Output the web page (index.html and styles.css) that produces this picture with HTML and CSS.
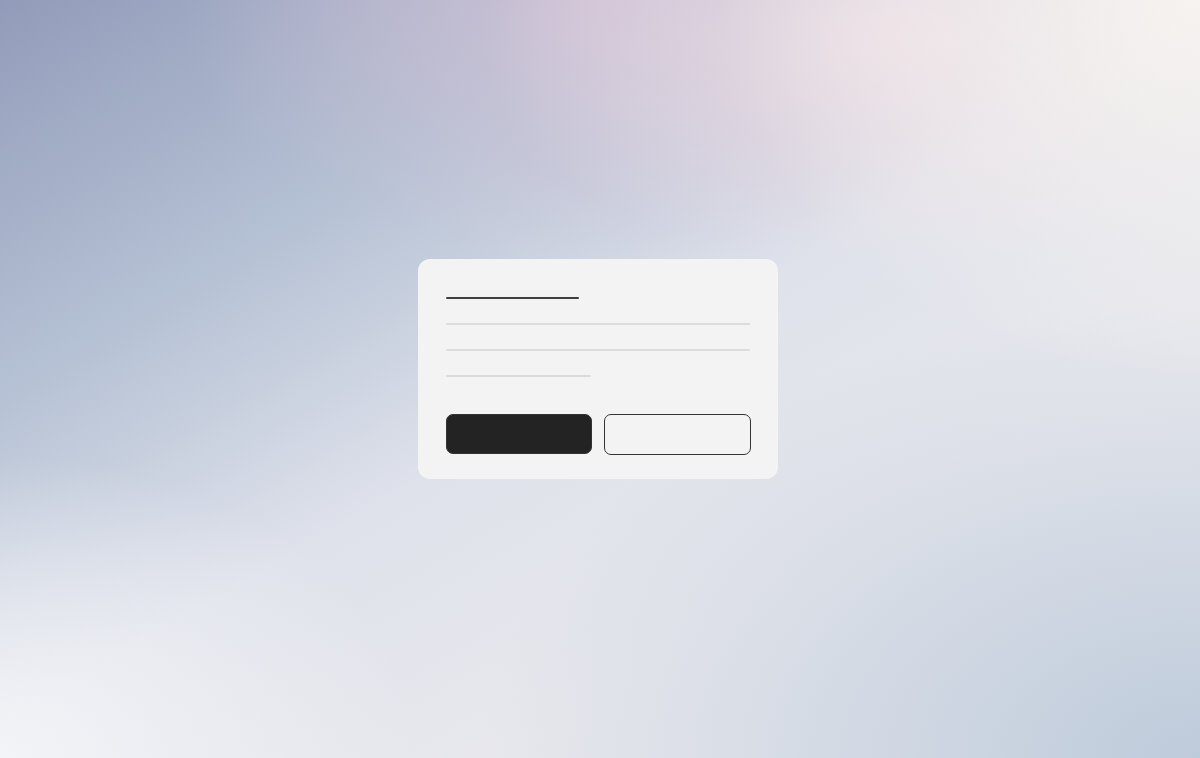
FILE: index.html
```html
<!DOCTYPE html>
<html lang="en">
<head>
<meta charset="utf-8">
<title>Dialog</title>
<link rel="stylesheet" href="styles.css">
</head>
<body>
<div class="stage">
  <div class="card" role="dialog">
    <div class="bar bar-title"></div>
    <div class="bar bar-text"></div>
    <div class="bar bar-text"></div>
    <div class="bar bar-text bar-short"></div>
    <div class="actions">
      <button class="btn btn-primary" type="button"></button>
      <button class="btn btn-secondary" type="button"></button>
    </div>
  </div>
</div>
</body>
</html>
```

FILE: styles.css
```css
* { box-sizing: border-box; }
html, body {
  margin: 0;
  padding: 0;
  width: 100%;
  height: 100%;
}
body {
  font-family: "Inter", "Liberation Sans", sans-serif;
  background:
    radial-gradient(ellipse 40% 50% at 100% 0%, rgba(246,243,240,1) 0%, rgba(246,243,240,0) 100%),
    radial-gradient(ellipse 35% 30% at 75% 5%, rgba(238,222,228,0.9) 0%, rgba(238,222,228,0) 100%),
    radial-gradient(ellipse 35% 40% at 0% 100%, rgba(243,244,247,1) 0%, rgba(243,244,247,0) 100%),
    radial-gradient(ellipse 35% 35% at 50% 0%, rgba(214,194,214,0.75) 0%, rgba(214,194,214,0) 100%),
    radial-gradient(ellipse 60% 60% at 100% 100%, rgba(190,203,219,1) 0%, rgba(190,203,219,0) 100%),
    linear-gradient(150deg, #929cba 0%, #b5c1d4 27%, #dfe2eb 50%, #e8e8ed 72%, #e8e8ed 100%);
  overflow: hidden;
}
.stage {
  width: 100%;
  height: 100%;
  display: flex;
  align-items: center;
  justify-content: center;
  padding: 0 4px 20px 0;
}
.card {
  width: 360px;
  height: 220px;
  background: #f3f3f3;
  border-radius: 12px;
  padding: 38px 28px 24px;
  display: flex;
  flex-direction: column;
}
.bar {
  height: 2px;
  border-radius: 1px;
}
.bar-title {
  width: 133px;
  background: #3e3e3e;
}
.bar-text {
  width: 100%;
  background: #dcdcdc;
  margin-top: 24px;
}
.bar-short {
  width: 145px;
}
.actions {
  margin-top: 37px;
  display: grid;
  grid-template-columns: 146px 147px;
  gap: 12px;
}
.btn {
  height: 41px;
  border-radius: 7px;
  border: 1px solid #333;
  padding: 0;
  margin: 0;
}
.btn-primary {
  background: #232323;
  height: 40px;
}
.btn-secondary {
  background: transparent;
}
```
